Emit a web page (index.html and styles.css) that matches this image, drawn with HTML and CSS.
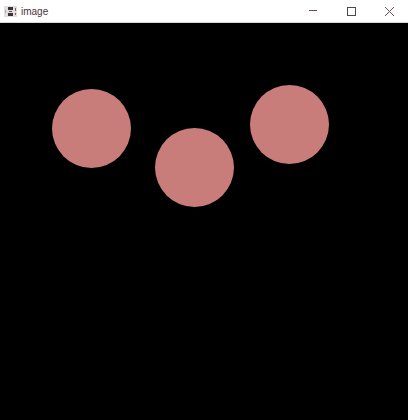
FILE: index.html
```html
<!DOCTYPE html>
<html lang="en">
<head>
  <meta charset="UTF-8">
  <title>image</title>
  <link rel="stylesheet" href="styles.css">
</head>
<body>
  <div class="window">
    <div class="titlebar">
      <svg class="app-icon" width="13" height="13" viewBox="0 0 13 13">
        <rect x="0" y="1" width="13" height="11" fill="#e4dfdf"/>
        <rect x="4" y="2" width="5" height="3" fill="#3a3236"/>
        <rect x="5" y="6" width="3" height="1" fill="#55494d"/>
        <rect x="4" y="8" width="5" height="3" fill="#3a3236"/>
        <rect x="11" y="3" width="1" height="3" fill="#7a5a5e"/>
        <rect x="11" y="8" width="1" height="2" fill="#7a5a5e"/>
        <rect x="1" y="5" width="1" height="3" fill="#b9aeb0"/>
      </svg>
      <span class="title">image</span>
      <div class="controls">
        <svg class="control" width="38" height="22" viewBox="0 0 38 22">
          <line x1="15" y1="10.5" x2="23" y2="10.5" stroke="#7a4a50" stroke-width="1"/>
        </svg>
        <svg class="control" width="38" height="22" viewBox="0 0 38 22">
          <rect x="15.5" y="7.5" width="8" height="8" fill="none" stroke="#50464a" stroke-width="1"/>
        </svg>
        <svg class="control" width="38" height="22" viewBox="0 0 38 22">
          <path d="M15 7l9 9M24 7l-9 9" fill="none" stroke="#7a4a50" stroke-width="1"/>
        </svg>
      </div>
    </div>
    <div class="canvas">
      <div class="dot dot-left"></div>
      <div class="dot dot-middle"></div>
      <div class="dot dot-right"></div>
    </div>
  </div>
</body>
</html>
```

FILE: styles.css
```css
html, body {
  margin: 0;
  padding: 0;
  background: #000;
}
.window {
  width: 408px;
  height: 420px;
  display: flex;
  flex-direction: column;
  overflow: hidden;
}
.titlebar {
  height: 23px;
  flex: none;
  display: flex;
  align-items: center;
  background: #fff;
  box-sizing: border-box;
  padding-left: 4px;
  border-bottom: 1px solid #d8d8d8;
}
.app-icon {
  flex: none;
}
.title {
  margin-left: 4px;
  font-family: "Liberation Sans", Arial, sans-serif;
  font-size: 10px;
  color: #4a3438;
}
.controls {
  margin-left: auto;
  display: flex;
}
.control {
  display: block;
}
.canvas {
  flex: 1;
  position: relative;
  background: #000;
}
.dot {
  position: absolute;
  width: 79px;
  height: 79px;
  border-radius: 50%;
  background: #c97d7b;
}
.dot-left {
  left: 52px;
  top: 66px;
}
.dot-middle {
  left: 155px;
  top: 105px;
}
.dot-right {
  left: 250px;
  top: 62px;
}
```
